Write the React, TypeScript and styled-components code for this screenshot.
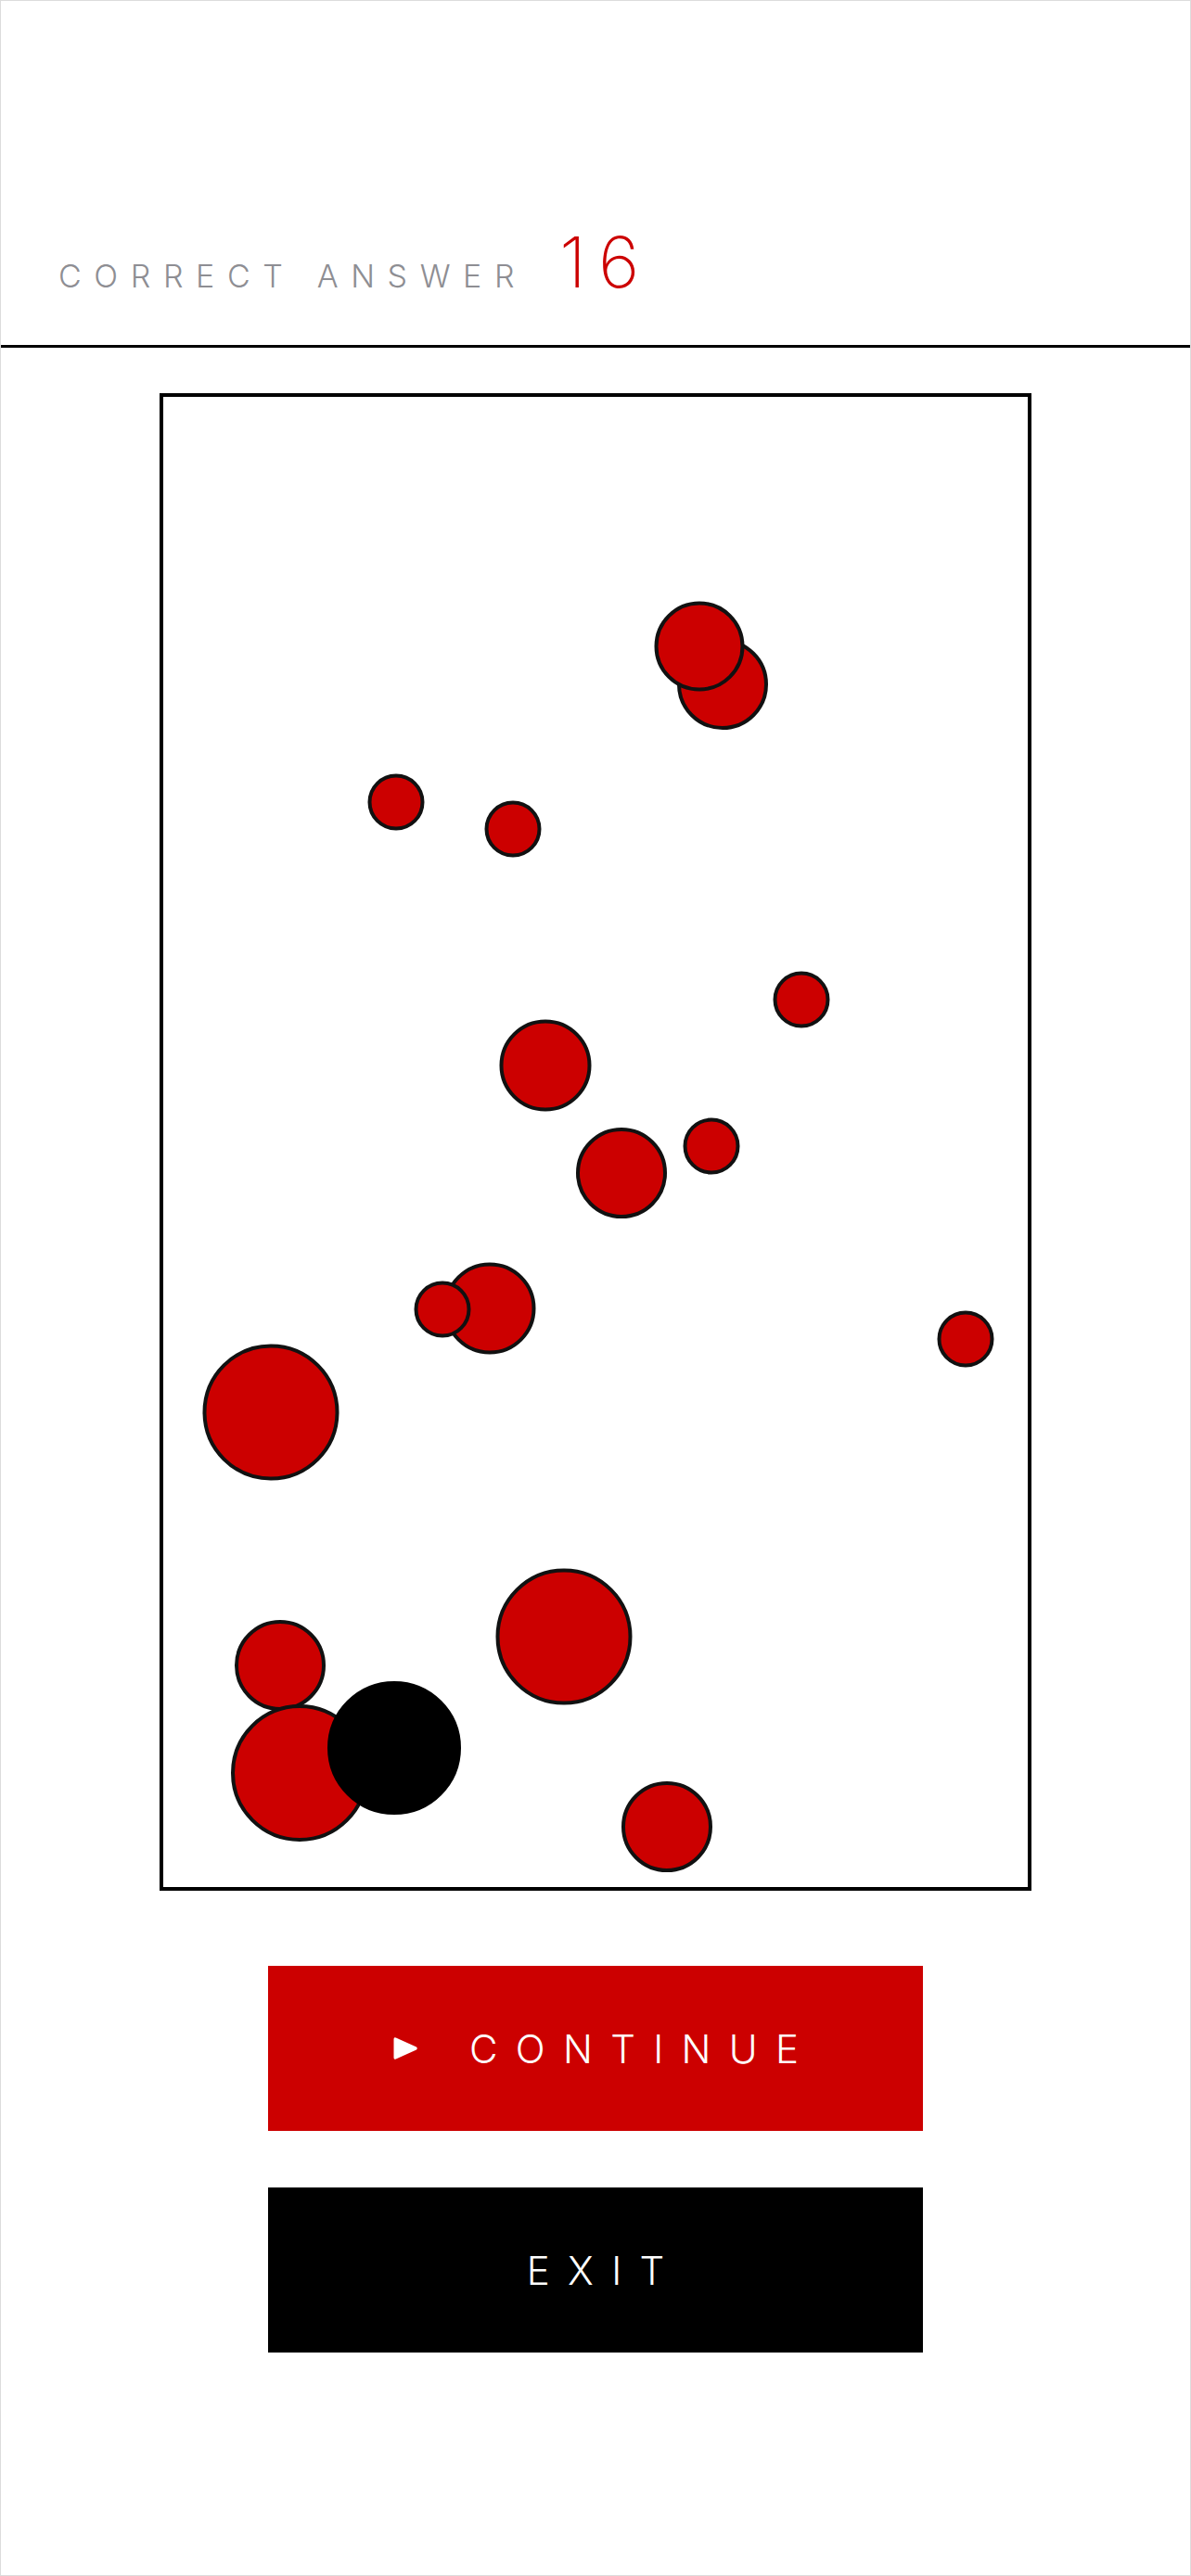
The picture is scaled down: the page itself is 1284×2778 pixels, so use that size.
import styled, { createGlobalStyle } from "styled-components";

const GlobalStyle = createGlobalStyle`
    html, body {
        margin: 0;
        padding: 0;
        background: #ffffff;
    }
    body {
        font-family: Inter, "Liberation Sans", sans-serif;
    }
`;

const Page = styled.div`
    box-sizing: border-box;
    min-height: 2778px;
    border: 1px solid #dcdcdc;
    display: flex;
    flex-direction: column;
    align-items: center;
`;

// 상단 점수 영역
const Header = styled.header`
    box-sizing: border-box;
    align-self: stretch;
    height: 374px;
    padding: 0 0 52px 62px;
    border-bottom: 3px solid #000;
    display: flex;
    align-items: flex-end;
`;

const ScoreRow = styled.div`
    display: flex;
    align-items: baseline;
`;

const ScoreLabel = styled.span`
    font-size: 34px;
    font-weight: 300;
    letter-spacing: 0.4em;
    color: #8e8e93;
    margin-right: 35px;
`;

const ScoreValue = styled.span`
    font-size: 76px;
    font-weight: 200;
    letter-spacing: 13px;
    color: #cc0000;
    line-height: 1;
`;

// 공이 흩어져 있는 보드
const Board = styled.div`
    box-sizing: border-box;
    position: relative;
    margin-top: 49px;
    width: 940px;
    height: 1615px;
    border: 4px solid #000;
    overflow: hidden;
`;

const Dot = styled.div<{ $size: number; $dark?: boolean }>`
    position: absolute;
    box-sizing: border-box;
    width: ${(p) => p.$size}px;
    height: ${(p) => p.$size}px;
    border-radius: 50%;
    background: ${(p) => (p.$dark ? "#000" : "#cc0000")};
    border: 4px solid ${(p) => (p.$dark ? "#000" : "#111")};
    transform: translate(-50%, -50%);
`;

const Actions = styled.div`
    margin-top: 81px;
    display: flex;
    flex-direction: column;
    gap: 61px;
`;

const ActionButton = styled.button<{ $variant: "primary" | "dark" }>`
    width: 706px;
    height: 178px;
    border: none;
    border-radius: 0;
    background: ${(p) => (p.$variant === "primary" ? "#cc0000" : "#000")};
    color: #fff;
    display: flex;
    align-items: center;
    justify-content: center;
    gap: 55px;
    font-family: Inter, "Liberation Sans", sans-serif;
    font-size: 42px;
    font-weight: 300;
    cursor: pointer;
`;

const ButtonLabel = styled.span`
    letter-spacing: 0.46em;
    margin-right: -0.46em;
`;

const PlayIcon = () => (
    <svg width="28" height="26" viewBox="0 0 28 26">
        <path
            d="M1.5 3 Q1.5 0.6 3.8 1.6 L26 11.4 Q27.8 13 26 14.6 L3.8 24.4 Q1.5 25.4 1.5 23 Z"
            fill="#fff"
        />
    </svg>
);

type Ball = { x: number; y: number; size: number; dark?: boolean };

// 보드 안쪽 기준 좌표 (중심점)
const balls: Ball[] = [
    { x: 603, y: 310, size: 98 },
    { x: 578, y: 269, size: 97 },
    { x: 251, y: 437, size: 61 },
    { x: 377, y: 466, size: 61 },
    { x: 688, y: 650, size: 61 },
    { x: 412, y: 721, size: 99 },
    { x: 591, y: 808, size: 61 },
    { x: 494, y: 837, size: 98 },
    { x: 352, y: 983, size: 99 },
    { x: 301, y: 984, size: 61 },
    { x: 865, y: 1016, size: 61 },
    { x: 116, y: 1095, size: 147 },
    { x: 432, y: 1337, size: 147 },
    { x: 126, y: 1368, size: 98 },
    { x: 147, y: 1484, size: 148 },
    { x: 249, y: 1457, size: 144, dark: true },
    { x: 543, y: 1542, size: 98 },
];

function App() {
    return (
        <Page>
            <GlobalStyle />
            <Header>
                <ScoreRow>
                    <ScoreLabel>CORRECT ANSWER</ScoreLabel>
                    <ScoreValue>16</ScoreValue>
                </ScoreRow>
            </Header>

            <Board>
                {balls.map((b, i) => (
                    <Dot
                        key={i}
                        $size={b.size}
                        $dark={b.dark}
                        style={{ left: b.x, top: b.y }}
                    />
                ))}
            </Board>

            <Actions>
                <ActionButton $variant="primary">
                    <PlayIcon />
                    <ButtonLabel>CONTINUE</ButtonLabel>
                </ActionButton>
                <ActionButton $variant="dark">
                    <ButtonLabel>EXIT</ButtonLabel>
                </ActionButton>
            </Actions>
        </Page>
    );
}

export default App;
